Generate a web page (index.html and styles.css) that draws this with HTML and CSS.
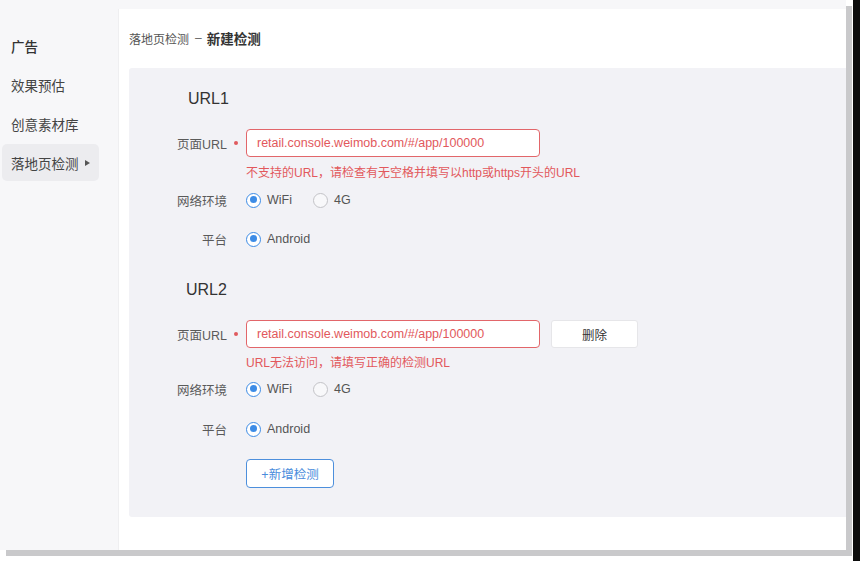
FILE: index.html
```html
<!DOCTYPE html>
<html lang="zh-CN">
<head>
  <meta charset="UTF-8">
  <title>落地页检测 - 新建检测</title>
  <link rel="stylesheet" href="styles.css">
</head>
<body>
  <div class="frame">
    <div class="sidebar">
      <div class="nav-item group">广告</div>
      <div class="nav-item">效果预估</div>
      <div class="nav-item">创意素材库</div>
      <div class="nav-item active">落地页检测<span class="caret"></span></div>
    </div>

    <div class="main">
      <div class="crumb">
        <span class="crumb-parent">落地页检测</span>
        <span class="crumb-sep">–</span>
        <span class="crumb-current">新建检测</span>
      </div>

      <div class="panel">
        <div class="section">
          <div class="sec-title">URL1</div>
          <div class="field">
            <span class="label required">页面URL</span>
            <div class="input error">retail.console.weimob.com/#/app/100000</div>
          </div>
          <div class="err">不支持的URL，请检查有无空格并填写以http或https开头的URL</div>
          <div class="field radio-row net">
            <span class="label">网络环境</span>
            <span class="radio checked"></span><span class="radio-text">WiFi</span>
            <span class="radio"></span><span class="radio-text">4G</span>
          </div>
          <div class="field radio-row plat">
            <span class="label">平台</span>
            <span class="radio checked"></span><span class="radio-text">Android</span>
          </div>
        </div>

        <div class="section second">
          <div class="sec-title">URL2</div>
          <div class="field">
            <span class="label required">页面URL</span>
            <div class="input error">retail.console.weimob.com/#/app/100000</div>
            <button class="btn-del">删除</button>
          </div>
          <div class="err">URL无法访问，请填写正确的检测URL</div>
          <div class="field radio-row net">
            <span class="label">网络环境</span>
            <span class="radio checked"></span><span class="radio-text">WiFi</span>
            <span class="radio"></span><span class="radio-text">4G</span>
          </div>
          <div class="field radio-row plat">
            <span class="label">平台</span>
            <span class="radio checked"></span><span class="radio-text">Android</span>
          </div>
        </div>

        <button class="btn-add">+新增检测</button>
      </div>
    </div>
  </div>
</body>
</html>
```

FILE: styles.css
```css
html, body {
  margin: 0;
  padding: 0;
}
body {
  width: 860px;
  height: 561px;
  overflow: hidden;
  font-family: "Liberation Sans", "Noto Sans CJK SC", sans-serif;
  background: linear-gradient(to right, #fff 853px, #0c0c0c 853px);
}
.frame {
  display: flex;
  width: 846px;
  height: 550px;
  background: #f7f7f9;
  box-shadow: 6px 6px 0 #c9c9cb;
}

/* 左侧导航 */
.sidebar {
  width: 118px;
  flex: none;
  padding-top: 27px;
  box-sizing: border-box;
}
.nav-item {
  display: flex;
  align-items: center;
  height: 37px;
  margin: 0 19px 2px 2px;
  padding-left: 9px;
  font-size: 13.5px;
  color: #444;
  border-radius: 5px;
}
.nav-item.group {
  color: #333;
  font-weight: 500;
}
.nav-item.active {
  background: #ececef;
}
.caret {
  width: 0;
  height: 0;
  margin-left: 6px;
  border-left: 5px solid #555;
  border-top: 3.5px solid transparent;
  border-bottom: 3.5px solid transparent;
}

/* 主区域 */
.main {
  flex: 1;
  margin-top: 9px;
  background: #fff;
  border-left: 1px solid #efeff1;
  box-sizing: border-box;
}
.crumb {
  display: flex;
  align-items: center;
  height: 20px;
  margin: 19px 0 20px 10px;
}
.crumb-parent {
  font-size: 12px;
  color: #555;
}
.crumb-sep {
  font-size: 12px;
  color: #666;
  margin: 0 5px 0 6px;
}
.crumb-current {
  font-size: 13.5px;
  font-weight: bold;
  color: #333;
}

.panel {
  margin-left: 10px;
  height: 449px;
  padding-top: 21px;
  box-sizing: border-box;
  background: #f2f2f6;
  border-radius: 3px 0 0 3px;
}
.section.second {
  margin-top: 31px;
}
.sec-title {
  height: 20px;
  line-height: 20px;
  margin-left: 59px;
  font-size: 16px;
  color: #333;
  margin-bottom: 20px;
}
.section.second .sec-title {
  margin-left: 57px;
}
.field {
  display: flex;
  align-items: center;
}
.label {
  position: relative;
  width: 98px;
  margin-right: 19px;
  flex: none;
  text-align: right;
  font-size: 12.5px;
  color: #5a5a5a;
}
.label.required::after {
  content: "";
  position: absolute;
  left: 105px;
  top: 50%;
  width: 4px;
  height: 4px;
  margin-top: -2px;
  border-radius: 50%;
  background: #e05a5e;
}
.input {
  width: 294px;
  height: 28px;
  line-height: 26px;
  box-sizing: border-box;
  padding-left: 10px;
  background: #fff;
  border: 1px solid #ccc;
  border-radius: 4px;
  font-size: 12.5px;
  color: #333;
}
.input.error {
  border-color: #e2666a;
  color: #e2585c;
}
.err {
  margin: 8px 0 0 117px;
  line-height: 16px;
  font-size: 12px;
  color: #e2585c;
}
.second .err {
  margin-top: 7px;
}
.radio-row {
  height: 20px;
}
.radio-row.net {
  margin-top: 9px;
}
.second .radio-row.net {
  margin-top: 8px;
}
.radio-row.plat {
  margin-top: 19px;
}
.second .radio-row.plat {
  margin-top: 20px;
}
.radio {
  width: 15px;
  height: 15px;
  box-sizing: border-box;
  border: 1px solid #c3c3c7;
  border-radius: 50%;
  background: #f8f8fa;
  position: relative;
  flex: none;
}
.radio.checked {
  border: 1.5px solid #3d8ce6;
  background: #fff;
}
.radio.checked::after {
  content: "";
  position: absolute;
  left: 2.5px;
  top: 2.5px;
  width: 7px;
  height: 7px;
  border-radius: 50%;
  background: #3d8ce6;
}
.radio-text {
  margin: 0 21px 0 6px;
  font-size: 12.5px;
  color: #555;
}

.btn-del {
  width: 87px;
  height: 28px;
  margin-left: 11px;
  background: #fff;
  border: 1px solid #e6e6e9;
  border-radius: 3px;
  font-family: inherit;
  font-size: 12.5px;
  color: #333;
}
.btn-add {
  display: block;
  width: 88px;
  height: 29px;
  margin: 20px 0 0 117px;
  background: #fff;
  border: 1px solid #4d8fdc;
  border-radius: 4px;
  font-family: inherit;
  font-size: 12.5px;
  color: #4a8cdc;
}
```
